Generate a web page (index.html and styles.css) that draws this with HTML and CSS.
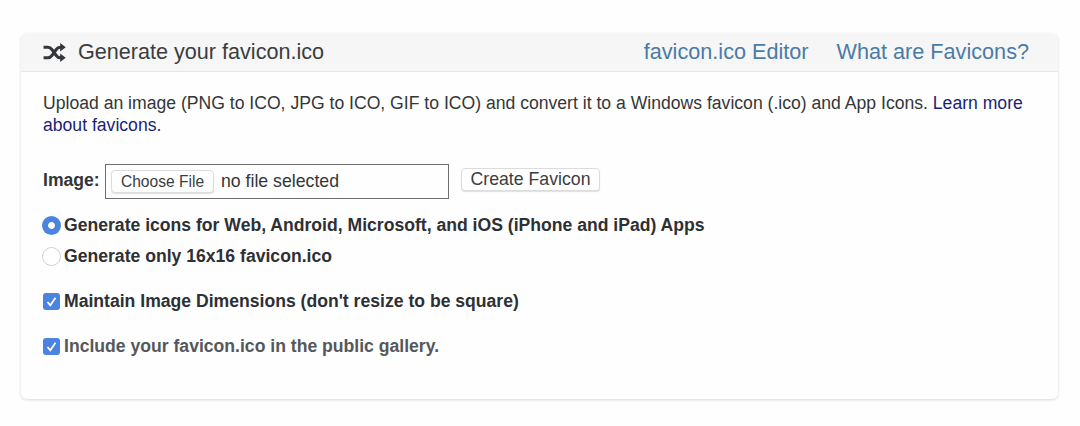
FILE: index.html
```html
<!DOCTYPE html>
<html lang="en">
<head>
<meta charset="utf-8">
<title>Generate your favicon.ico</title>
<link rel="stylesheet" href="styles.css">
</head>
<body>
<section class="card">
  <header class="card-head">
    <h1 class="title">
      <svg class="shuffle" viewBox="0 0 24 20" width="23" height="19" aria-hidden="true">
        <path d="M0.500 4.500h4.500c2 0 3.200.9 4.400 2.600l4.200 5.800c1.100 1.500 2.200 2.600 4.200 2.600H20" fill="none" stroke="#33363a" stroke-width="3.200"/>
        <path d="M0.500 15.500h4.500c2 0 3.200-.9 4.400-2.600l4.200-5.800c1.100-1.500 2.200-2.600 4.200-2.600H20" fill="none" stroke="#33363a" stroke-width="3.200"/>
        <path d="M18 0 23.800 4.500 18 9zM18 11 23.800 15.500 18 20z" fill="#33363a"/>
      </svg>
      Generate your favicon.ico
    </h1>
    <nav class="head-links">
      <a href="#">favicon.ico Editor</a>
      <a href="#">What are Favicons?</a>
    </nav>
  </header>
  <div class="card-body">
    <p class="intro">Upload an image (PNG to ICO, JPG to ICO, GIF to ICO) and convert it to a Windows favicon (.ico) and App Icons. <a href="#">Learn more about favicons.</a></p>
    <div class="file-row">
      <span class="file-label">Image:</span>
      <div class="file-box"><span class="file-btn">Choose File</span><span class="file-name">no file selected</span></div>
      <button class="create" type="button">Create Favicon</button>
    </div>
    <div class="opt opt-first"><span class="radio radio-on"></span><span>Generate icons for Web, Android, Microsoft, and iOS (iPhone and iPad) Apps</span></div>
    <div class="opt opt-second"><span class="radio"></span><span>Generate only 16x16 favicon.ico</span></div>
    <div class="opt opt-third"><span class="check"><svg viewBox="0 0 17 17" width="17" height="17" aria-hidden="true"><path d="M4.500 9 7.300 12.300 12.500 4.800" fill="none" stroke="#fff" stroke-width="1.800"/></svg></span><span>Maintain Image Dimensions (don't resize to be square)</span></div>
    <div class="opt opt-fourth muted"><span class="check"><svg viewBox="0 0 17 17" width="17" height="17" aria-hidden="true"><path d="M4.500 9 7.300 12.300 12.500 4.800" fill="none" stroke="#fff" stroke-width="1.800"/></svg></span><span>Include your favicon.ico in the public gallery.</span></div>
  </div>
</section>
</body>
</html>
```
FILE: styles.css
```css
* { box-sizing: border-box; }
html, body { margin: 0; padding: 0; background: #fefefe; }
body {
  height: 426px;
  padding: 33px 22px 0 21px;
  overflow: hidden;
  font-family: "Liberation Sans", Arial, sans-serif;
  color: #333638;
}
.card {
  height: 366px;
  background: #fefefe;
  border-radius: 6px;
  box-shadow: 0 1px 3px rgba(0, 0, 0, .14);
  overflow: hidden;
}
.card-head {
  height: 39px;
  display: flex;
  align-items: center;
  justify-content: space-between;
  padding: 0 29px 0 22px;
  background: #f6f6f6;
  border-bottom: 1px solid #e8e8e8;
}
.title {
  margin: 0;
  display: flex;
  align-items: center;
  gap: 12px;
  font-size: 21.600px;
  font-weight: 400;
  color: #3a3d40;
}
.head-links { display: flex; gap: 28px; font-size: 21.650px; }
.head-links a { color: #4a7ba6; text-decoration: none; }
.card-body { padding: 20px 22px 0; }
.intro { margin: 0; font-size: 17.600px; line-height: 22px; }
.intro a { color: #1a1f78; text-decoration: none; }
.file-row { display: flex; align-items: center; margin-top: 28px; }
.file-label { font-size: 17.600px; font-weight: 700; width: 62px; margin-bottom: 2px; }
.file-box {
  width: 344px;
  height: 35px;
  display: flex;
  align-items: center;
  padding-left: 5px;
  border: 1px solid #6e6e6e;
  font-size: 17.700px;
}
.file-btn {
  width: 103px;
  height: 23px;
  display: flex;
  align-items: center;
  justify-content: center;
  margin-right: 7px;
  background: #fff;
  border: 1px solid #dcdcdc;
  border-radius: 4px;
  box-shadow: 0 1px 1px rgba(0, 0, 0, .12);
  font-size: 15.600px;
  color: #3a3d40;
}
.create {
  width: 139px;
  height: 23px;
  margin: -5px 0 0 12px;
  padding: 0;
  background: #fff;
  border: 1px solid #dcdcdc;
  border-radius: 4px;
  box-shadow: 0 1px 1px rgba(0, 0, 0, .12);
  font-family: inherit;
  font-size: 17.700px;
  color: #3a3d40;
}
.opt {
  display: flex;
  align-items: center;
  height: 22px;
  font-size: 17.600px;
  font-weight: 700;
  color: #2e3033;
}
.opt-first { margin-top: 15px; }
.opt-second { margin-top: 9px; }
.opt-third { margin-top: 23px; }
.opt-fourth { margin-top: 23px; }
.muted { color: #55585b; }
.radio {
  flex: none;
  width: 19px;
  height: 19px;
  margin: 0 3px 0 -1px;
  border-radius: 50%;
  background: #fff;
  border: 1px solid #cfcfcf;
}
.radio-on {
  border: 0;
  background: radial-gradient(circle at center, #fff 0 3px, #4a83e0 3.800px);
}
.check {
  flex: none;
  width: 17px;
  height: 17px;
  margin-right: 4px;
  border-radius: 3px;
  background: #4a83e0;
  display: flex;
}
```
